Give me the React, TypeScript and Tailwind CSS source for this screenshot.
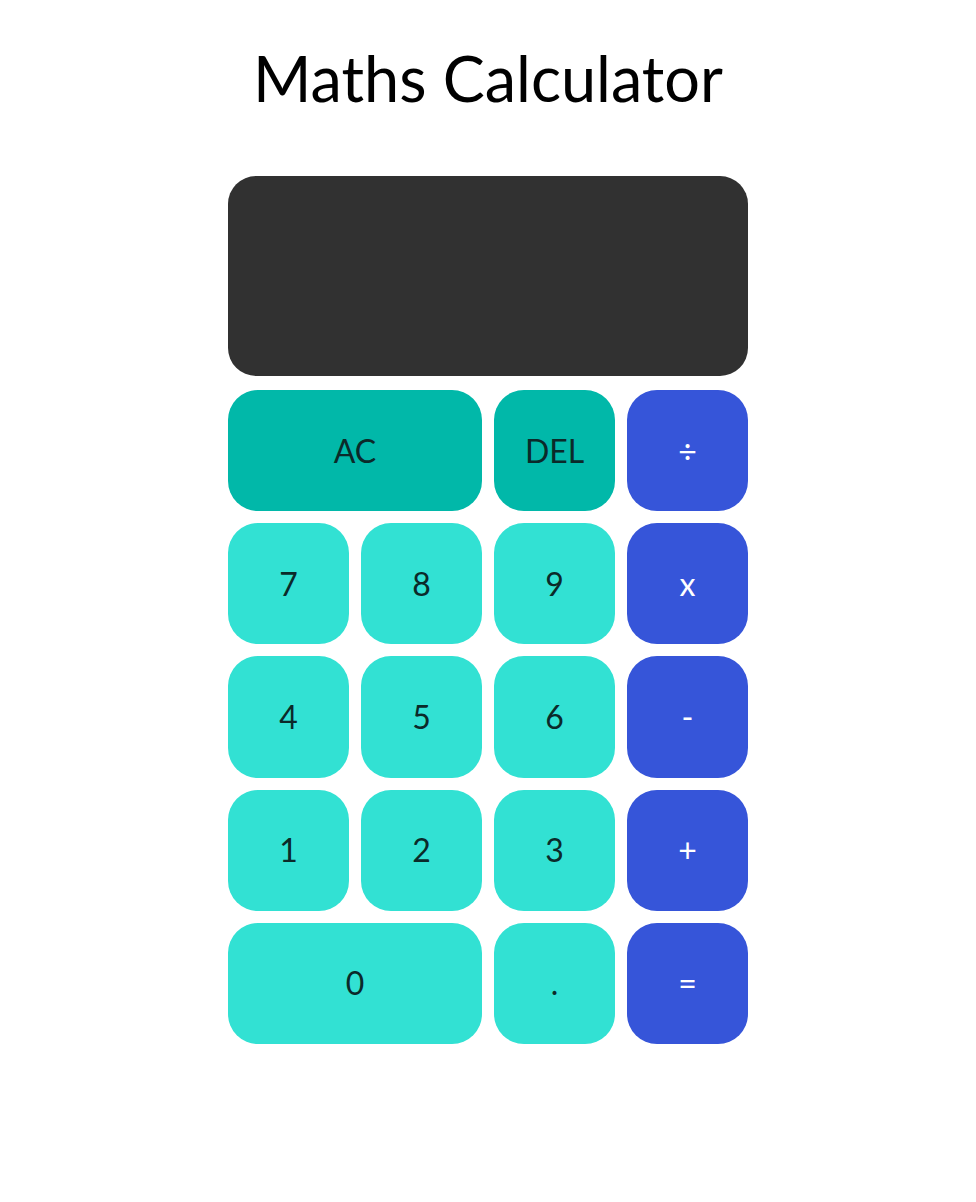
const keys: { label: string; kind: "fn" | "num" | "op"; wide?: boolean }[] = [
  { label: "AC", kind: "fn", wide: true },
  { label: "DEL", kind: "fn" },
  { label: "÷", kind: "op" },
  { label: "7", kind: "num" },
  { label: "8", kind: "num" },
  { label: "9", kind: "num" },
  { label: "x", kind: "op" },
  { label: "4", kind: "num" },
  { label: "5", kind: "num" },
  { label: "6", kind: "num" },
  { label: "-", kind: "op" },
  { label: "1", kind: "num" },
  { label: "2", kind: "num" },
  { label: "3", kind: "num" },
  { label: "+", kind: "op" },
  { label: "0", kind: "num", wide: true },
  { label: ".", kind: "num" },
  { label: "=", kind: "op" },
];

const kindClass = {
  fn: "bg-[#01b8a9] text-[#0b2a2a]",
  num: "bg-[#32e1d3] text-[#0b2a2a]",
  op: "bg-[#3655d9] text-white",
};

export default function App() {
  return (
    <div className="min-h-screen bg-white font-['Lato','Noto_Sans',sans-serif]">
      <h1 className="pt-[36px] text-center text-[63px] leading-[84px] text-black">
        Maths Calculator
      </h1>
      <div className="mx-auto mt-[56px] grid w-[520px] grid-cols-4 gap-x-3 gap-y-3">
        <div className="col-span-4 mb-[2px] h-[200px] rounded-[28px] bg-[#313131]" />
        {keys.map((k) => (
          <button
            key={k.label}
            className={`${k.wide ? "col-span-2" : ""} ${kindClass[k.kind]} flex h-[121.2px] items-center justify-center rounded-[30px] text-[32px]`}
          >
            {k.label}
          </button>
        ))}
      </div>
    </div>
  );
}
